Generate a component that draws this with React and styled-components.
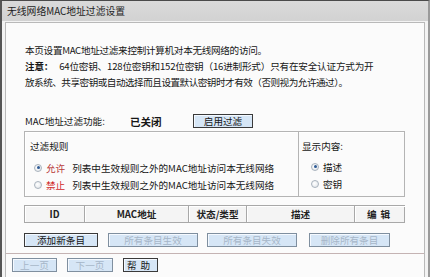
import React from "react";
import styled, { createGlobalStyle } from "styled-components";

const Global = createGlobalStyle`
  html, body { margin: 0; padding: 0; background: #f2f2f2; }
  body { font-family: "Noto Sans CJK SC", "Noto Sans", sans-serif; color: #161616; }
  * { box-sizing: border-box; }
`;

const Frame = styled.div`
  width: 430px;
  height: 277px;
  border-top: 1px solid #4a4a4a;
  border-left: 2px solid #555;
  border-right: 2px solid #9a9a9a;
  background: #f3f3f3;
  display: flex;
  flex-direction: column;
  overflow: hidden;
  font-size: 9.6px;
`;

const TitleBar = styled.div`
  height: 20px;
  flex: none;
  background: linear-gradient(#dadada, #d2d2d2);
  display: flex;
  align-items: center;
  padding-left: 5px;
  font-size: 9.8px;
  color: #1e1e1e;
`;

const Panel = styled.div`
  flex: 1;
  margin: 1px 3px 0 3px;
  border: 1px solid #b9b9b9;
  border-bottom: none;
  background: #fbfbfb;
  display: flex;
  flex-direction: column;
`;

const Body = styled.div`
  padding: 19px 0 0 18px;
  display: flex;
  flex-direction: column;
`;

const Para = styled.div`
  line-height: 16px;
  margin-left: 1px;
  white-space: nowrap;
  letter-spacing: ${(p) => p.$ls ?? -0.3}px;
`;

const Strong = styled.b`
  font-weight: 700;
  margin-right: 6px;
`;

const FilterRow = styled.div`
  margin-top: 23px;
  height: 16px;
  display: flex;
  align-items: center;
  margin-left: 1px;
`;

const Label = styled.span`
  width: 105px;
`;

const Status = styled.b`
  font-weight: 700;
  font-size: 10.5px;
  width: 63px;
`;

const Btn = styled.button`
  font-family: inherit;
  font-size: 9.6px;
  height: 14px;
  width: ${(p) => p.$w}px;
  margin-left: ${(p) => p.$ml || 0}px;
  padding: 0;
  line-height: 12px;
  background: #d6e6f6;
  border: 1px solid ${(p) => (p.$disabled ? "#7f8f9f" : "#3a3a3a")};
  box-shadow: inset 1px 1px 0 #f4f9ff;
  color: ${(p) => (p.$disabled ? "#a6b6c8" : "#151515")};
  letter-spacing: ${(p) => p.$ls || 0}px;
  cursor: default;
`;

const Group = styled.div`
  margin-top: 2px;
  width: 381px;
  height: 66px;
  border: 1px solid #b4b4b4;
  box-shadow: inset 1px 1px 0 #fff;
  display: grid;
  grid-template-columns: 273px 1fr;
`;

const Cell = styled.div`
  padding: 6px 0 0 ${(p) => p.$pl}px;
  border-left: ${(p) => (p.$divider ? "1px solid #b4b4b4" : "none")};
  display: flex;
  flex-direction: column;
`;

const CellTitle = styled.div`
  line-height: 16px;
  margin-bottom: ${(p) => p.$mb}px;
`;

const RadioRow = styled.div`
  display: flex;
  align-items: center;
  height: 17px;
  padding-left: ${(p) => p.$pl}px;
  white-space: nowrap;
`;

const Radio = styled.span`
  width: 8px;
  height: 8px;
  border-radius: 50%;
  border: 1px solid #a9b3bd;
  background: radial-gradient(circle at 40% 40%, #ffffff, #dfe3e8);
  margin-right: 4px;
  display: inline-flex;
  align-items: center;
  justify-content: center;
  flex: none;
  &::after {
    content: "";
    width: 3px;
    height: 3px;
    border-radius: 50%;
    background: ${(p) => (p.$on ? "#2e5a94" : "transparent")};
  }
`;

const Red = styled.span`
  color: ${(p) => p.$c};
  margin-right: 7px;
`;

const Header = styled.div`
  margin-top: 8px;
  width: 381px;
  height: 18px;
  display: grid;
  grid-template-columns: 59px 104px 58px 108px 52px;
  border: 1px solid #a8a8a8;
  background: #f4f4f4;
`;

const Th = styled.div`
  display: flex;
  align-items: center;
  justify-content: center;
  border-left: ${(p) => (p.$first ? "none" : "1px solid #a8a8a8")};
  box-shadow: inset 1px 1px 0 #fff;
  font-weight: 600;
  color: #222;
  letter-spacing: ${(p) => p.$ls || 0}px;
`;

const BtnRow = styled.div`
  margin-top: 10px;
  display: flex;
  align-items: center;
`;

const Sep = styled.div`
  margin-top: 6px;
  height: 1px;
  background: #c4b3b3;
`;

const Footer = styled.div`
  margin-top: 4px;
  padding-left: 6px;
  display: flex;
  align-items: center;
`;

export default function App() {
  return (
    <>
      <Global />
      <Frame>
        <TitleBar>无线网络MAC地址过滤设置</TitleBar>
        <Panel>
          <Body>
            <Para>本页设置MAC地址过滤来控制计算机对本无线网络的访问。</Para>
            <Para $ls={-0.2}>
              <Strong>注意：</Strong>64位密钥、128位密钥和152位密钥（16进制形式）只有在安全认证方式为开
            </Para>
            <Para $ls={-0.5}>放系统、共享密钥或自动选择而且设置默认密钥时才有效（否则视为允许通过）。</Para>
            <FilterRow>
              <Label>MAC地址过滤功能:</Label>
              <Status>已关闭</Status>
              <Btn $w={60}>启用过滤</Btn>
            </FilterRow>
            <Group>
              <Cell $pl={5}>
                <CellTitle $mb={5}>过滤规则</CellTitle>
                <RadioRow $pl={4}>
                  <Radio $on />
                  <Red $c="#b83a3a">允许</Red>
                  列表中生效规则之外的MAC地址访问本无线网络
                </RadioRow>
                <RadioRow $pl={4}>
                  <Radio />
                  <Red $c="#d02828">禁止</Red>
                  列表中生效规则之外的MAC地址访问本无线网络
                </RadioRow>
              </Cell>
              <Cell $pl={3} $divider>
                <CellTitle $mb={4}>显示内容:</CellTitle>
                <RadioRow $pl={9}>
                  <Radio $on />
                  描述
                </RadioRow>
                <RadioRow $pl={9}>
                  <Radio />
                  密钥
                </RadioRow>
              </Cell>
            </Group>
            <Header>
              <Th $first>ID</Th>
              <Th>MAC地址</Th>
              <Th>状态/类型</Th>
              <Th>描述</Th>
              <Th $ls={4}>编辑</Th>
            </Header>
            <BtnRow>
              <Btn $w={74}>添加新条目</Btn>
              <Btn $w={90} $ml={10} $disabled>所有条目生效</Btn>
              <Btn $w={90} $ml={9} $disabled>所有条目失效</Btn>
              <Btn $w={81} $ml={12} $disabled>删除所有条目</Btn>
            </BtnRow>
          </Body>
          <Sep />
          <Footer>
            <Btn $w={45} $disabled>上一页</Btn>
            <Btn $w={46} $ml={10} $disabled>下一页</Btn>
            <Btn $w={35} $ml={10} $ls={4}>帮助</Btn>
          </Footer>
        </Panel>
      </Frame>
    </>
  );
}
